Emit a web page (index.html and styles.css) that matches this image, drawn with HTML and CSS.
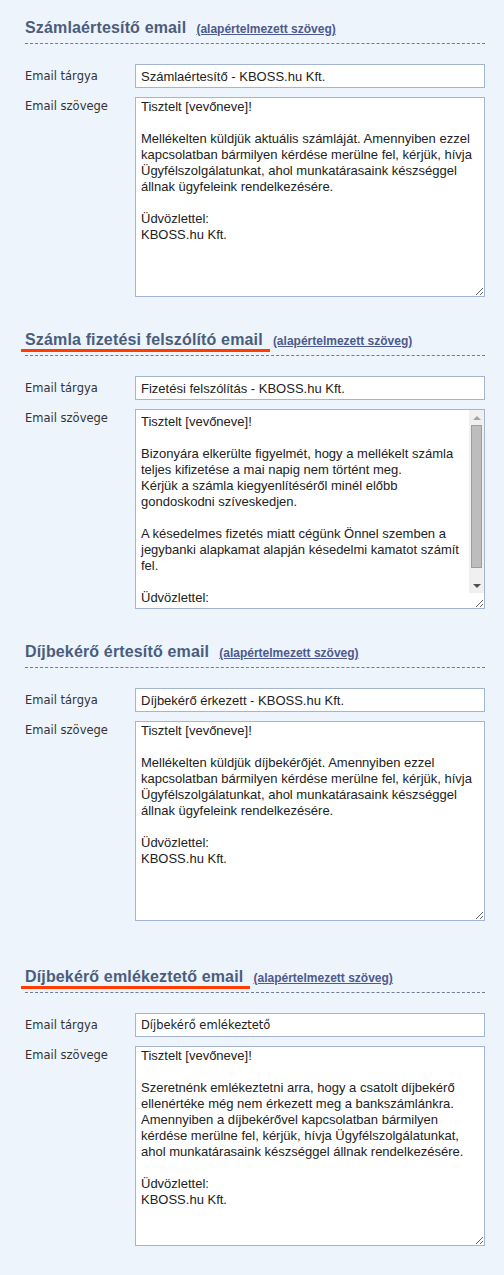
FILE: index.html
```html
<!DOCTYPE html>
<html>

<head>
    <title>Email sablonok</title>
    <link rel="stylesheet" href="styles.css">
</head>

<body>
    <div class="page">

        <div class="mail-block">
            <div class="mail-head">
                <h2>Számlaértesítő email</h2>
                <a href="#">(alapértelmezett szöveg)</a>
            </div>
            <div class="row">
                <label for="subj1">Email tárgya</label>
                <input class="field" id="subj1" type="text" value="Számlaértesítő - KBOSS.hu Kft.">
            </div>
            <div class="row row-text">
                <label for="body1">Email szövege</label>
                <textarea class="field" id="body1">Tisztelt [vevőneve]!

Mellékelten küldjük aktuális számláját. Amennyiben ezzel kapcsolatban bármilyen kérdése merülne fel, kérjük, hívja Ügyfélszolgálatunkat, ahol munkatárasaink készséggel állnak ügyfeleink rendelkezésére.

Üdvözlettel:
KBOSS.hu Kft.</textarea>
            </div>
        </div>

        <div class="mail-block">
            <div class="mail-head">
                <h2 class="marked">Számla fizetési felszólító email</h2>
                <a href="#">(alapértelmezett szöveg)</a>
            </div>
            <div class="row">
                <label for="subj2">Email tárgya</label>
                <input class="field" id="subj2" type="text" value="Fizetési felszólítás - KBOSS.hu Kft.">
            </div>
            <div class="row row-text">
                <label for="body2">Email szövege</label>
                <div class="scroll-box">
                    <textarea class="field scrolled" id="body2">Tisztelt [vevőneve]!

Bizonyára elkerülte figyelmét, hogy a mellékelt számla teljes kifizetése a mai napig nem történt meg.
Kérjük a számla kiegyenlítéséről minél előbb gondoskodni szíveskedjen.

A késedelmes fizetés miatt cégünk Önnel szemben a jegybanki alapkamat alapján késedelmi kamatot számít fel.

Üdvözlettel:
KBOSS.hu Kft.</textarea>
                    <div class="scroll-bar">
                        <span class="arrow up"></span>
                        <span class="thumb"></span>
                        <span class="track"></span>
                        <span class="arrow down"></span>
                    </div>
                </div>
            </div>
        </div>

        <div class="mail-block">
            <div class="mail-head">
                <h2>Díjbekérő értesítő email</h2>
                <a href="#">(alapértelmezett szöveg)</a>
            </div>
            <div class="row">
                <label for="subj3">Email tárgya</label>
                <input class="field" id="subj3" type="text" value="Díjbekérő érkezett - KBOSS.hu Kft.">
            </div>
            <div class="row row-text">
                <label for="body3">Email szövege</label>
                <textarea class="field" id="body3">Tisztelt [vevőneve]!

Mellékelten küldjük díjbekérőjét. Amennyiben ezzel kapcsolatban bármilyen kérdése merülne fel, kérjük, hívja Ügyfélszolgálatunkat, ahol munkatárasaink készséggel állnak ügyfeleink rendelkezésére.

Üdvözlettel:
KBOSS.hu Kft.</textarea>
            </div>
        </div>

        <div class="mail-block late">
            <div class="mail-head">
                <h2 class="marked">Díjbekérő emlékeztető email</h2>
                <a href="#">(alapértelmezett szöveg)</a>
            </div>
            <div class="row">
                <label for="subj4">Email tárgya</label>
                <input class="field plain" id="subj4" type="text" value="Díjbekérő emlékeztető">
            </div>
            <div class="row row-text">
                <label for="body4">Email szövege</label>
                <textarea class="field" id="body4">Tisztelt [vevőneve]!

Szeretnénk emlékeztetni arra, hogy a csatolt díjbekérő ellenértéke még nem érkezett meg a bankszámlánkra. Amennyiben a díjbekérővel kapcsolatban bármilyen kérdése merülne fel, kérjük, hívja Ügyfélszolgálatunkat, ahol munkatárasaink készséggel állnak rendelkezésére.

Üdvözlettel:
KBOSS.hu Kft.</textarea>
            </div>
        </div>

    </div>
</body>

</html>
```

FILE: styles.css
```css
body {
    margin: 0;
    background: #edf4fc;
    font-family: "DejaVu Sans", sans-serif;
    color: #333;
}

.page {
    padding: 19px 19px 30px 25px;
}

.mail-block + .mail-block {
    margin-top: 34px;
}

.mail-block.late {
    margin-top: 47px;
}

.mail-head {
    line-height: 18px;
    padding-bottom: 6px;
    margin-bottom: 20px;
    border-bottom: 1px dashed #6d7d95;
}

.mail-head h2 {
    display: inline;
    position: relative;
    margin: 0;
    font: bold 16px/18px "Liberation Sans", Arial, sans-serif;
    letter-spacing: 0.15px;
    color: #4b5d7c;
}

/* red marker under the highlighted titles */
.mail-head h2.marked::after {
    content: "";
    position: absolute;
    left: -4px;
    right: -7px;
    bottom: -4px;
    height: 3px;
    background: #ff3d00;
}

.mail-head a {
    margin-left: 5px;
    font: bold 12px "Liberation Sans", Arial, sans-serif;
    color: #4d5a8d;
    text-decoration: underline;
}

.row {
    display: flex;
    align-items: flex-start;
}

.row + .row {
    margin-top: 9px;
}

.row label {
    flex: none;
    width: 110px;
    font-size: 11.5px;
    line-height: 24px;
    color: #333;
}

.row-text label {
    line-height: 18px;
}

.field {
    flex: 1;
    box-sizing: border-box;
    margin: 0;
    border: 1px solid #a3b5d0;
    border-radius: 0;
    background: #fff;
    font: 13px/16px "Liberation Sans", Arial, sans-serif;
    color: #222;
    outline: none;
}

input.field {
    height: 24px;
    padding: 0 5px;
}

input.field.plain {
    font: 11.5px "DejaVu Sans", sans-serif;
}

textarea.field {
    display: block;
    height: 200px;
    padding: 1px 5px;
}

/* textarea with a vertical scrollbar */
.scroll-box {
    flex: 1;
    position: relative;
}

textarea.field.scrolled {
    width: 100%;
    padding: 4px 20px 1px 5px;
    overflow: hidden;
}

.scroll-bar {
    position: absolute;
    top: 1px;
    right: 1px;
    bottom: 16px;
    width: 15px;
    display: flex;
    flex-direction: column;
    background: #f0f0f0;
}

.scroll-bar .arrow {
    flex: none;
    height: 15px;
    display: flex;
    align-items: center;
    justify-content: center;
}

.scroll-bar .arrow::before {
    content: "";
    border-left: 4px solid transparent;
    border-right: 4px solid transparent;
}

.scroll-bar .arrow.up::before {
    border-bottom: 4px solid #a3a3a3;
}

.scroll-bar .arrow.down::before {
    border-top: 4px solid #505050;
}

.scroll-bar .thumb {
    flex: none;
    height: 143px;
    margin: 0 2px;
    box-sizing: border-box;
    border: 1px solid #9d9d9d;
    background: #bdbdbd;
}

.scroll-bar .track {
    flex: 1;
}
```
